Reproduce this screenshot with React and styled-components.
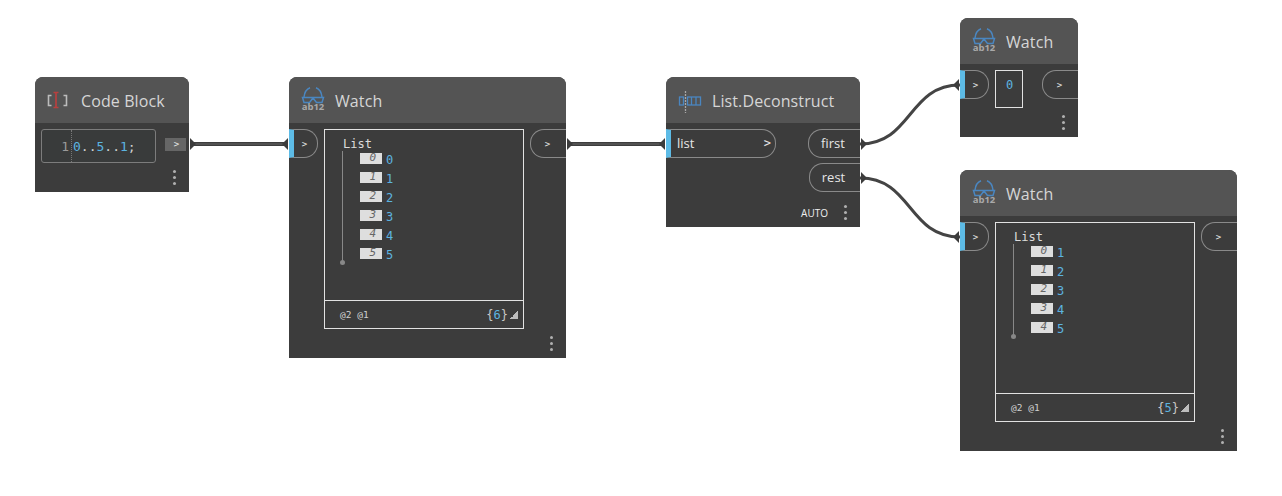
import React from "react";
import styled, { createGlobalStyle } from "styled-components";

const GlobalStyle = createGlobalStyle`
  html, body {
    margin: 0;
    background: #fff;
  }
`;

const watchSmall = [0];
const watchFull = ["0", "1", "2", "3", "4", "5"];
const watchRest = ["1", "2", "3", "4", "5"];

const GlassesIcon = () => (
  <IconSvg viewBox="0 0 24 26">
    <g fill="none" stroke="#4a86c0" strokeWidth="1.5">
      <path d="M3 10 C3.5 5.5 6 2 9 0.8 M21 10 C20.5 5.5 18 2 15 0.8" />
      <path d="M1.5 10.5 H22.5 L21 15.5 H15.5 L12 11 L8.5 15.5 H3 Z" />
    </g>
    <text x="12" y="22.5" textAnchor="middle" fontFamily="Open Sans" fontSize="9.5" fontWeight="700" fill="#a9a9a9">
      ab12
    </text>
  </IconSvg>
);

const DeconstructIcon = () => (
  <IconSvg viewBox="0 0 24 26">
    <g fill="none" stroke="#4a86c0" strokeWidth="1.3">
      <rect x="1.5" y="10" width="4" height="8" />
      <rect x="9.5" y="10" width="13" height="8" />
      <path d="M13.5 10 V18 M18 10 V18" />
    </g>
    <path d="M7.5 4 V26" stroke="#a8a8a8" strokeWidth="1.3" strokeDasharray="2 1" />
  </IconSvg>
);

const CodeIcon = () => (
  <IconSvg viewBox="0 0 24 26">
    <path d="M4.5 8.5 H1.5 V18.5 H4.5 M16.5 8.5 H19.5 V18.5 H16.5" fill="none" stroke="#bcbcbc" strokeWidth="1.6" />
    <path d="M6.5 5.5 H11.5 M6.5 20.5 H11.5 M9 5.5 V20.5" fill="none" stroke="#b8403f" strokeWidth="1.7" />
  </IconSvg>
);

const Dots = () => (
  <DotStack>
    <Dot />
    <Dot />
    <Dot />
  </DotStack>
);

const Node = ({ x, y, w, h, icon, title, children, footer }) => (
  <NodeCard $x={x} $y={y} $w={w} $h={h}>
    <Header>
      <IconSlot>{icon}</IconSlot>
      <Title>{title}</Title>
    </Header>
    <Body>{children}</Body>
    <Footer>
      {footer}
      <Dots />
    </Footer>
  </NodeCard>
);

const WatchList = ({ items, size }) => (
  <WatchBox>
    <WatchContent>
      <ListLabel>List</ListLabel>
      <Tree>
        {items.map((value, i) => (
          <TreeRow key={i}>
            <IndexChip>{i}</IndexChip>
            <Value>{value}</Value>
          </TreeRow>
        ))}
      </Tree>
    </WatchContent>
    <WatchFooter>
      <Levels>@2 @1</Levels>
      <Count>
        {"{"}
        <CountNumber>{size}</CountNumber>
        {"}"}
      </Count>
      <ResizeGrip />
    </WatchFooter>
  </WatchBox>
);

const WatchPorts = ({ children }) => (
  <>
    <InPort>
      <Arrow>&gt;</Arrow>
    </InPort>
    {children}
    <OutPort>
      <Arrow>&gt;</Arrow>
    </OutPort>
  </>
);

// wire end caps, dir 1 points right, -1 points left
const pip = (x, y, dir) =>
  `M${x + dir} ${y - 6} L${x + dir * 5} ${y - 2} L${x + dir * 7} ${y} L${x + dir * 5} ${y + 2} L${x + dir} ${y + 6} Z`;

const pips = [
  [189, 144, 1],
  [289, 144, -1],
  [566, 144, 1],
  [666, 144, -1],
  [860, 144, 1],
  [860, 178, 1],
  [960, 85, -1],
  [960, 237, -1],
];

const App = () => (
  <>
    <GlobalStyle />
    <Canvas>
      <Wires viewBox="0 0 1282 496">
        <g fill="none" stroke="#444" strokeWidth="3">
          <path d="M860 144 C912 144 908 85 960 85" />
          <path d="M860 178 C912 178 908 237 960 237" />
        </g>
        <g fill="none" stroke="#3e3e3e" strokeWidth="4">
          <path d="M190 144 H288" />
          <path d="M567 144 H665" />
        </g>
        <g fill="none" stroke="#666" strokeWidth="1">
          <path d="M195 144 H283" />
          <path d="M572 144 H660" />
        </g>
        <g fill="#3c3c3c">
          {pips.map(([x, y, dir]) => (
            <path key={`${x}-${y}`} d={pip(x, y, dir)} />
          ))}
        </g>
      </Wires>

      <Node x={35} y={77} w={154} h={115} icon={<CodeIcon />} title="Code Block">
        <Editor>
          <LineNumber>1</LineNumber>
          <Code>
            <Num>0</Num>..<Num>5</Num>..<Num>1</Num>;
          </Code>
        </Editor>
        <RunButton>&gt;</RunButton>
      </Node>

      <Node x={289} y={77} w={277} h={281} icon={<GlassesIcon />} title="Watch">
        <WatchPorts>
          <WatchList items={watchFull} size={6} />
        </WatchPorts>
      </Node>

      <Node
        x={666}
        y={77}
        w={194}
        h={150}
        icon={<DeconstructIcon />}
        title="List.Deconstruct"
        footer={<Lacing>AUTO</Lacing>}
      >
        <InColumn>
          <NamedInPort>
            list
            <Arrow $big>&gt;</Arrow>
          </NamedInPort>
        </InColumn>
        <OutColumn>
          <NamedOutPort $w={52}>first</NamedOutPort>
          <NamedOutPort $w={51}>rest</NamedOutPort>
        </OutColumn>
      </Node>

      <Node x={960} y={18} w={118} h={119} icon={<GlassesIcon />} title="Watch">
        <WatchPorts>
          <MiniWatch>
            {watchSmall.map((value) => (
              <Num key={value}>{value}</Num>
            ))}
          </MiniWatch>
        </WatchPorts>
      </Node>

      <Node x={960} y={170} w={277} h={281} icon={<GlassesIcon />} title="Watch">
        <WatchPorts>
          <WatchList items={watchRest} size={5} />
        </WatchPorts>
      </Node>
    </Canvas>
  </>
);

const Canvas = styled.div`
  position: relative;
  width: 1282px;
  height: 496px;
  overflow: hidden;
  background: #fff;
`;

const Wires = styled.svg`
  position: absolute;
  left: 0;
  top: 0;
  width: 1282px;
  height: 496px;
`;

const NodeCard = styled.div`
  position: absolute;
  left: ${(p) => p.$x}px;
  top: ${(p) => p.$y}px;
  width: ${(p) => p.$w}px;
  height: ${(p) => p.$h}px;
  display: flex;
  flex-direction: column;
  background: #3c3c3c;
  border-radius: 8px 8px 0 0;
  overflow: hidden;
`;

const Header = styled.div`
  height: 46px;
  flex: none;
  display: flex;
  align-items: center;
  padding-left: 12px;
  background: #545454;
`;

const IconSlot = styled.div`
  width: 24px;
  height: 26px;
  margin-right: 10px;
`;

const IconSvg = styled.svg`
  display: block;
  width: 24px;
  height: 26px;
`;

const Title = styled.div`
  padding-top: 2px;
  font-family: "Open Sans", sans-serif;
  font-size: 16px;
  letter-spacing: 0.1px;
  color: #d6d6d6;
  white-space: nowrap;
`;

const Body = styled.div`
  flex: 1;
  min-height: 0;
  display: flex;
  align-items: flex-start;
  padding-top: 6px;
`;

const Footer = styled.div`
  height: 29px;
  flex: none;
  display: flex;
  align-items: center;
  justify-content: flex-end;
  padding-right: 13px;
  gap: 16px;
`;

const DotStack = styled.div`
  display: flex;
  flex-direction: column;
  gap: 3px;
`;

const Dot = styled.span`
  width: 3px;
  height: 3px;
  border-radius: 50%;
  background: #b0b0b0;
`;

const Lacing = styled.span`
  font-family: "Open Sans", sans-serif;
  font-size: 10px;
  color: #eee;
`;

const Arrow = styled.span`
  font-family: "DejaVu Sans Mono", monospace;
  font-size: ${(p) => (p.$big ? 12 : 9)}px;
  color: #e6e6e6;
`;

const InPort = styled.div`
  flex: none;
  box-sizing: border-box;
  width: 29px;
  height: 29px;
  margin-right: 6px;
  display: flex;
  align-items: center;
  justify-content: center;
  padding-right: 2px;
  border: 1px solid #8a8a8a;
  border-left: 5px solid #5dbbe6;
  border-radius: 0 14px 14px 0;
`;

const OutPort = styled.div`
  flex: none;
  box-sizing: border-box;
  width: 36px;
  height: 29px;
  margin-left: auto;
  display: flex;
  align-items: center;
  justify-content: center;
  padding-right: 2px;
  border: 1px solid #8a8a8a;
  border-right: 0;
  border-radius: 14px 0 0 14px;
`;

const WatchBox = styled.div`
  flex: none;
  box-sizing: border-box;
  width: 200px;
  height: 200px;
  display: flex;
  flex-direction: column;
  border: 1px solid #e2e2e2;
`;

const WatchContent = styled.div`
  flex: 1;
  padding: 8px 0 0 18px;
`;

const ListLabel = styled.div`
  font-family: "DejaVu Sans Mono", monospace;
  font-size: 12px;
  line-height: 13px;
  color: #dcdcdc;
`;

const Tree = styled.div`
  position: relative;
  display: flex;
  flex-direction: column;
  gap: 8px;
  margin-left: -1px;
  padding: 2px 0 3px 17px;
  border-left: 1px solid #888;

  &::after {
    content: "";
    position: absolute;
    left: -3px;
    bottom: -3px;
    width: 5px;
    height: 5px;
    border-radius: 50%;
    background: #888;
  }
`;

const TreeRow = styled.div`
  display: flex;
  align-items: center;
  gap: 4px;
  height: 11px;
`;

const IndexChip = styled.span`
  box-sizing: border-box;
  width: 22px;
  height: 11px;
  padding-right: 6px;
  background: #dedede;
  color: #666;
  font-family: "DejaVu Sans Mono", monospace;
  font-style: italic;
  font-size: 11px;
  line-height: 10px;
  text-align: right;
`;

const Value = styled.span`
  padding-top: 2px;
  font-family: "DejaVu Sans Mono", monospace;
  font-size: 12px;
  color: #5cb4e0;
`;

const WatchFooter = styled.div`
  flex: none;
  box-sizing: border-box;
  height: 28px;
  display: flex;
  align-items: center;
  padding: 0 5px 0 15px;
  border-top: 1px solid #e2e2e2;
`;

const Levels = styled.span`
  font-family: "DejaVu Sans Mono", monospace;
  font-size: 9.5px;
  color: #d0d0d0;
  margin-right: auto;
`;

const Count = styled.span`
  font-family: "DejaVu Sans Mono", monospace;
  font-size: 12px;
  color: #c8c8c8;
`;

const CountNumber = styled.span`
  color: #5cb4e0;
`;

const ResizeGrip = styled.span`
  width: 8px;
  height: 8px;
  margin-left: 2px;
  background: linear-gradient(135deg, transparent 50%, #bdbdbd 50%);
`;

const MiniWatch = styled.div`
  flex: none;
  box-sizing: border-box;
  width: 28px;
  height: 38px;
  padding: 7px 0 0 1px;
  text-align: center;
  border: 1px solid #e2e2e2;
  font-family: "DejaVu Sans Mono", monospace;
  font-size: 12px;
  line-height: 15px;
`;

const Num = styled.span`
  color: #5cb4e0;
`;

const Editor = styled.div`
  flex: none;
  box-sizing: border-box;
  width: 115px;
  height: 34px;
  margin-left: 6px;
  display: flex;
  align-items: center;
  border: 1px solid #7c7c7c;
  border-radius: 3px;
  background: #393b3b;
  font-family: "DejaVu Sans Mono", monospace;
  font-size: 13px;
`;

const LineNumber = styled.span`
  width: 30px;
  height: 100%;
  box-sizing: border-box;
  padding-right: 2px;
  display: flex;
  align-items: center;
  justify-content: flex-end;
  color: #9a9a9a;
  border-right: 1px dotted #777;
`;

const Code = styled.span`
  padding-left: 1px;
  color: #d0d0d0;
`;

const RunButton = styled.div`
  flex: none;
  width: 21px;
  height: 13px;
  margin: 9px 0 0 9px;
  padding-left: 2px;
  box-sizing: border-box;
  background: #666;
  color: #e6e6e6;
  font-family: "DejaVu Sans Mono", monospace;
  font-size: 9px;
  line-height: 13px;
  text-align: center;
`;

const InColumn = styled.div`
  flex: 1;
`;

const NamedInPort = styled.div`
  box-sizing: border-box;
  width: 110px;
  height: 29px;
  display: flex;
  align-items: center;
  justify-content: space-between;
  padding: 0 4px 2px 6px;
  border: 1px solid #8a8a8a;
  border-left: 5px solid #5dbbe6;
  border-radius: 0 14px 14px 0;
  font-family: "Open Sans", sans-serif;
  font-size: 13px;
  color: #e6e6e6;
`;

const OutColumn = styled.div`
  display: flex;
  flex-direction: column;
  align-items: flex-end;
  gap: 5px;
`;

const NamedOutPort = styled.div`
  box-sizing: border-box;
  width: ${(p) => p.$w}px;
  height: 29px;
  display: flex;
  align-items: center;
  justify-content: center;
  padding: 0 3px 2px 0;
  border: 1px solid #8a8a8a;
  border-right: 0;
  border-radius: 14px 0 0 14px;
  font-family: "Open Sans", sans-serif;
  font-size: 13px;
  color: #e6e6e6;
`;

export default App;
